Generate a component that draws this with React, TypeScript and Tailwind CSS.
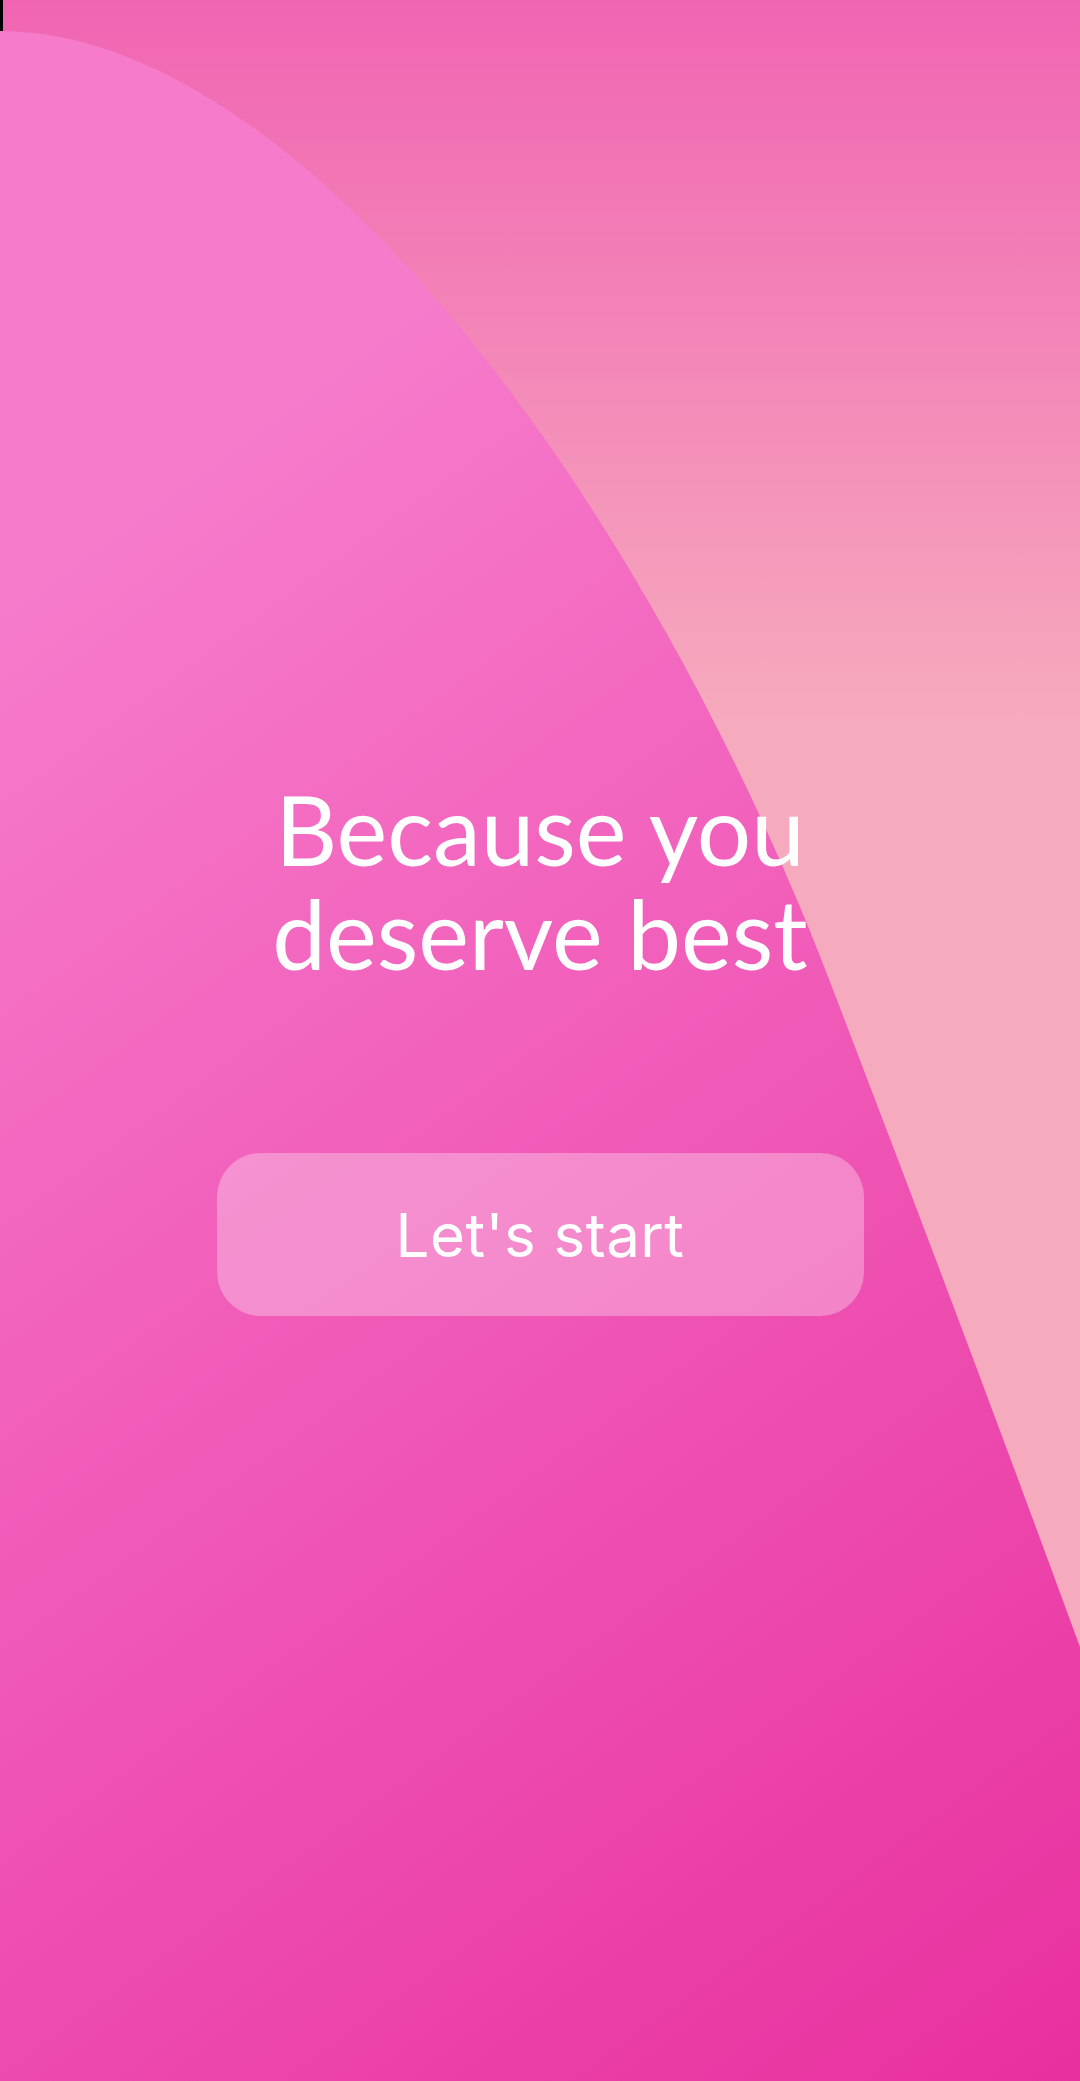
import React from 'react'

function Backdrop() {
    return (
        <svg className="absolute inset-0" width="1080" height="2081" viewBox="0 0 1080 2081" preserveAspectRatio="none">
            <defs>
                <linearGradient id="top" x1="0" y1="0" x2="0" y2="720" gradientUnits="userSpaceOnUse">
                    <stop offset="0" stopColor="#F065B2" />
                    <stop offset="1" stopColor="#F6AABD" />
                </linearGradient>
                <linearGradient id="blob" x1="0" y1="600" x2="1080" y2="2081" gradientUnits="userSpaceOnUse">
                    <stop offset="0" stopColor="#F67BCB" />
                    <stop offset="1" stopColor="#E8309E" />
                </linearGradient>
            </defs>
            <rect x="0" y="0" width="1080" height="2081" fill="url(#top)" />
            <path d="M0 31 C300 31 649 500 837 1000 Q960 1320 1080 1647 L1080 2081 L0 2081 Z" fill="url(#blob)" />
        </svg>
    )
}

export default function App() {
    return (
        <main className="relative w-[1080px] h-[2081px] overflow-hidden">
            <Backdrop />
            {/* little black notch top-left */}
            <div className="absolute left-0 top-0 w-[3px] h-[31px] bg-black" />

            <section className="relative flex flex-col items-center pt-[777px]">
                <h1 className="text-white text-center text-[96px] leading-[104px] font-normal font-['Lato',sans-serif]">
                    Because you<br />deserve best
                </h1>

                <button className="mt-[168px] w-[647px] h-[163px] rounded-[44px] bg-white/30 flex items-center justify-center">
                    <span className="text-white text-[60px] font-normal font-['Inter',sans-serif] tracking-[0.5px]">Let's start</span>
                </button>
            </section>
        </main>
    )
}
